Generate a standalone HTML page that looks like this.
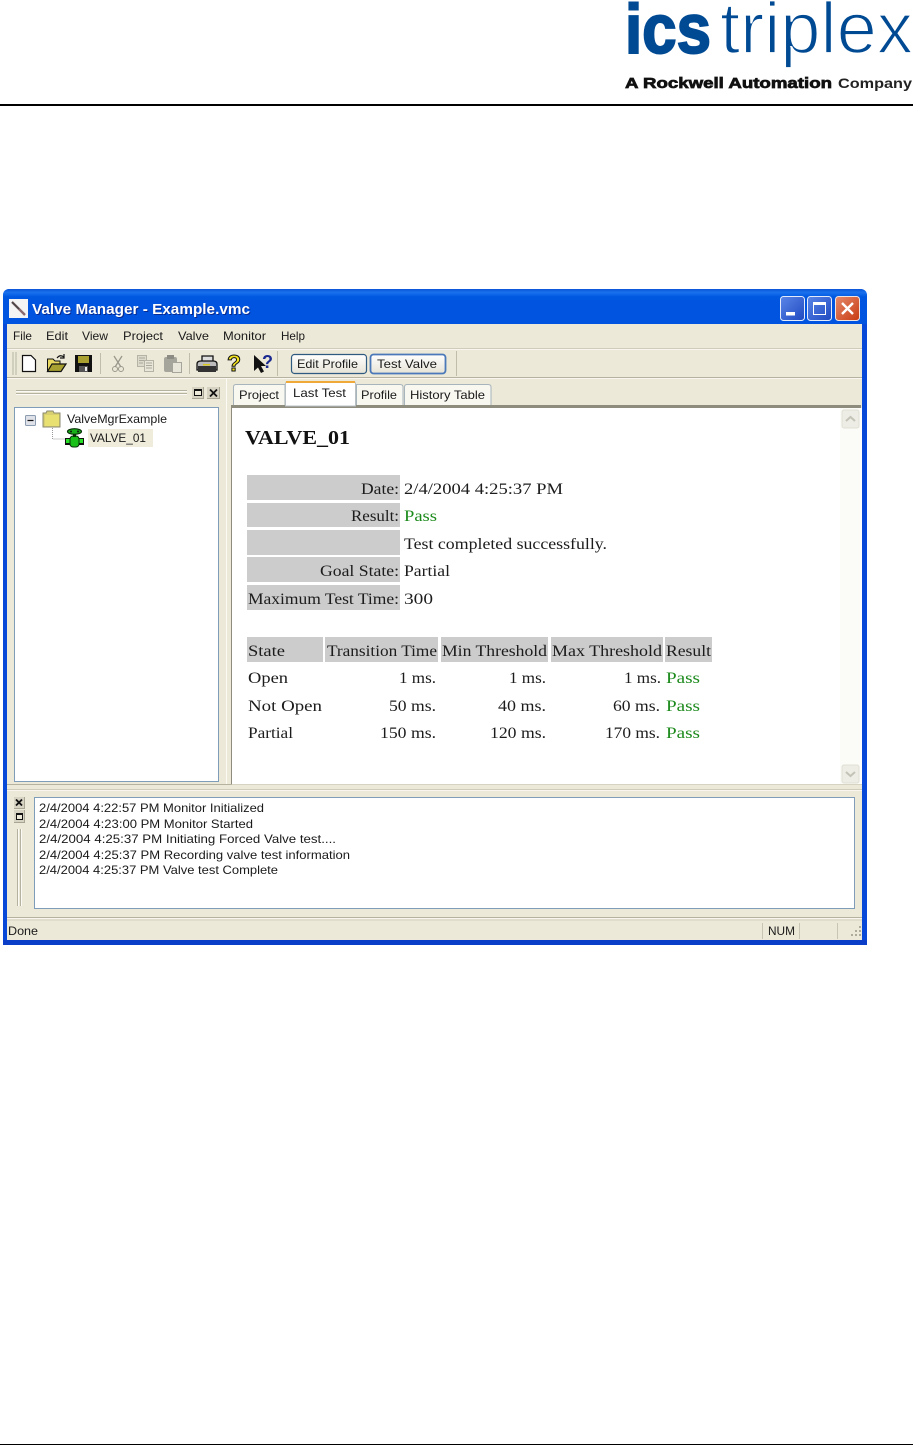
<!DOCTYPE html>
<html><head><meta charset="utf-8"><style>
html,body{margin:0;padding:0;background:#fff;width:913px;height:1445px;overflow:hidden}
svg{display:block}
.t{font-family:"Liberation Sans",sans-serif;font-size:12px;fill:#1a1a1a}
.s{font-family:"Liberation Serif",serif;font-size:16px;fill:#1c1c1c}
.g{fill:#1b8a1b}
</style></head><body>
<svg width="913" height="1445" viewBox="0 0 913 1445" xmlns="http://www.w3.org/2000/svg">
<defs>
<linearGradient id="tb" x1="0" y1="0" x2="0" y2="1"><stop offset="0" stop-color="#0a55d8"/><stop offset=".1" stop-color="#1a72ee"/><stop offset=".22" stop-color="#0058e0"/><stop offset=".8" stop-color="#0050dc"/><stop offset="1" stop-color="#0a66f0"/></linearGradient>
<linearGradient id="bb" x1="0" y1="0" x2="1" y2="1"><stop offset="0" stop-color="#5a86e8"/><stop offset="1" stop-color="#1f49c0"/></linearGradient>
<linearGradient id="rb" x1="0" y1="0" x2="1" y2="1"><stop offset="0" stop-color="#e58a6c"/><stop offset="1" stop-color="#c83a10"/></linearGradient>
<linearGradient id="btn" x1="0" y1="0" x2="0" y2="1"><stop offset="0" stop-color="#fff"/><stop offset="1" stop-color="#e6e3d6"/></linearGradient>
</defs>

<!-- logo -->
<text x="625" y="53" textLength="86" lengthAdjust="spacingAndGlyphs" font-family="Liberation Sans,sans-serif" font-weight="700" font-size="70" fill="#004a94" stroke="#004a94" stroke-width="2">ics</text>
<text x="720" y="53" textLength="193" lengthAdjust="spacingAndGlyphs" font-family="Liberation Sans,sans-serif" font-size="72" fill="#004a94" stroke="#fff" stroke-width="1.800">triplex</text>
<text x="625" y="88" textLength="207" lengthAdjust="spacingAndGlyphs" font-family="Liberation Sans,sans-serif" font-weight="700" font-size="15" fill="#111" stroke="#111" stroke-width=".7">A Rockwell Automation</text>
<text x="838" y="88" textLength="74" lengthAdjust="spacingAndGlyphs" font-family="Liberation Sans,sans-serif" font-weight="700" font-size="14" fill="#222">Company</text>
<rect x="0" y="104" width="913" height="2" fill="#000"/>
<rect x="0" y="1444" width="913" height="1" fill="#000"/>

<!-- window frame -->
<path d="M3 945V296q0-7 7-7H859q8 0 8 8V945Z" fill="#0848d8"/>
<rect x="3" y="289" width="864" height="35" fill="url(#tb)" rx="6"/>
<rect x="3" y="300" width="864" height="24" fill="#0054e0"/>
<rect x="3" y="940" width="864" height="5" fill="#0a3ec8"/>
<rect x="7" y="324" width="855" height="616" fill="#ece9d8"/>

<!-- title -->
<rect x="9" y="299" width="19" height="19" fill="#f4f4f4"/>
<path d="M12 302L25 315" stroke="#8a6a70" stroke-width="2.400"/>
<path d="M12 302L19 309" stroke="#444" stroke-width="1.400"/>
<text x="33" y="315" textLength="218" lengthAdjust="spacingAndGlyphs" font-family="Liberation Sans,sans-serif" font-weight="700" font-size="14.500" fill="#0a2a90">Valve Manager - Example.vmc</text>
<text x="32" y="314" textLength="218" lengthAdjust="spacingAndGlyphs" font-family="Liberation Sans,sans-serif" font-weight="700" font-size="14.500" fill="#fff">Valve Manager - Example.vmc</text>

<!-- caption buttons -->
<rect x="780.500" y="296.500" width="24" height="24" rx="3" fill="url(#bb)" stroke="#e4ecfb"/>
<rect x="786" y="312" width="9" height="3.500" fill="#fff"/>
<rect x="807.500" y="296.500" width="24" height="24" rx="3" fill="url(#bb)" stroke="#e4ecfb"/>
<rect x="813.500" y="302.500" width="12" height="12" fill="none" stroke="#fff"/>
<rect x="813" y="302" width="13" height="3" fill="#fff"/>
<rect x="835.500" y="296.500" width="24" height="24" rx="3" fill="url(#rb)" stroke="#f0e4e0"/>
<path d="M842 303L853 314M853 303L842 314" stroke="#fff" stroke-width="2.400"/>

<!-- menu -->
<text class="t" x="13" y="340" textLength="19" lengthAdjust="spacingAndGlyphs">File</text>
<text class="t" x="46" y="340" textLength="22" lengthAdjust="spacingAndGlyphs">Edit</text>
<text class="t" x="82" y="340" textLength="26" lengthAdjust="spacingAndGlyphs">View</text>
<text class="t" x="123" y="340" textLength="40" lengthAdjust="spacingAndGlyphs">Project</text>
<text class="t" x="178" y="340" textLength="31" lengthAdjust="spacingAndGlyphs">Valve</text>
<text class="t" x="223" y="340" textLength="43" lengthAdjust="spacingAndGlyphs">Monitor</text>
<text class="t" x="281" y="340" textLength="24" lengthAdjust="spacingAndGlyphs">Help</text>
<rect x="7" y="348" width="855" height="1" fill="#cfccbc"/>
<rect x="7" y="349" width="855" height="1" fill="#f8f6ee"/>

<!-- toolbar -->
<rect x="7" y="377" width="855" height="1" fill="#b5b2a0"/>
<rect x="7" y="378" width="855" height="1" fill="#f8f6ee"/>
<path d="M13 352V375M16 352V375" stroke="#b5b2a0"/>
<path d="M22.500 355.500H31L35.500 360V371.500H22.500Z" fill="#fff" stroke="#111" stroke-width="1.200"/>
<path d="M47.500 371.500V359H53L55 361H60V371.500Z" fill="#e8d860" stroke="#111"/>
<path d="M47.500 371.500L52 364H66L61 371.500Z" fill="#a8a030" stroke="#111" stroke-width="1.200"/>
<path d="M57 358Q60 354 64 357M64 354V358H60" fill="none" stroke="#111" stroke-width="1.200"/>
<rect x="75" y="355" width="17" height="17" fill="#111"/>
<rect x="78" y="356" width="11" height="7" fill="#a8a030"/>
<rect x="79" y="366" width="9" height="6" fill="#555"/>
<rect x="85" y="367" width="2" height="4" fill="#eee"/>
<rect x="100" y="353" width="1" height="21" fill="#c0bdaa"/>
<path d="M114 356L121 367M122 356L115 367" stroke="#9a988c" stroke-width="1.300"/>
<circle cx="115" cy="369" r="2.500" fill="none" stroke="#9a988c"/>
<circle cx="121" cy="369" r="2.500" fill="none" stroke="#9a988c"/>
<rect x="137.500" y="355.500" width="9" height="11" fill="#dcdacb" stroke="#b5b3a6"/>
<path d="M139 358H145M139 360.500H145M139 363H143" stroke="#aaa89c"/>
<rect x="144.500" y="360.500" width="9" height="11" fill="#e8e6d8" stroke="#b5b3a6"/>
<path d="M146 363H152M146 365.500H152M146 368H152" stroke="#aaa89c"/>
<rect x="164" y="357" width="13" height="15" rx="2" fill="#a6a59c"/>
<rect x="167" y="355" width="7" height="4" fill="#8c8b84"/>
<rect x="172.500" y="362.500" width="9" height="10" fill="#e8e6d8" stroke="#a6a59c"/>
<rect x="189" y="353" width="1" height="21" fill="#c0bdaa"/>
<path d="M202 356H213V362H202Z" fill="#ddd" stroke="#111" stroke-width="1.300"/>
<path d="M197 364Q197 361 201 361H213Q217 361 217 364V370H197Z" fill="#bbb" stroke="#111" stroke-width="1.300"/>
<rect x="198" y="366" width="18" height="6" fill="#333"/>
<rect x="203" y="364" width="7" height="1.500" fill="#d8c820"/>
<text x="227" y="371" font-family="Liberation Sans,sans-serif" font-weight="700" font-size="23" fill="#f4e420" stroke="#111" stroke-width="1">?</text>
<path d="M254 355V371L258 367.500L261 373L264 371.500L261 366H266Z" fill="#111"/>
<text x="262" y="368" font-family="Liberation Sans,sans-serif" font-weight="700" font-size="18" fill="#1a2a90">?</text>
<rect x="277" y="351" width="1" height="25" fill="#c0bdaa"/>

<rect x="291.500" y="354.500" width="75" height="19" rx="3" fill="url(#btn)" stroke="#2f5a80" stroke-width="1.200"/>
<text class="t" x="297" y="368" textLength="61" lengthAdjust="spacingAndGlyphs">Edit Profile</text>
<rect x="370.500" y="354.500" width="75" height="19" rx="3" fill="url(#btn)" stroke="#4a78b8" stroke-width="1.800"/>
<text class="t" x="377" y="368" textLength="60" lengthAdjust="spacingAndGlyphs">Test Valve</text>
<rect x="456" y="351" width="1" height="25" fill="#c0bdaa"/>

<!-- left panel -->
<path d="M16 390.500H187M16 393.500H187" stroke="#b5b2a0"/>
<path d="M16 391.500H187M16 394.500H187" stroke="#fbfaf4"/>
<rect x="192" y="387" width="12" height="12" fill="#d6d3c2"/>
<path d="M192 398.500H204M203.500 387V399" stroke="#a8a594"/>
<rect x="194.500" y="389.500" width="7" height="6" fill="#ece9d8" stroke="#111"/>
<rect x="194" y="389" width="8" height="2" fill="#111"/>
<rect x="207" y="387" width="13" height="12" fill="#d6d3c2"/>
<path d="M207 398.500H220M219.500 387V399" stroke="#a8a594"/>
<path d="M210 389.500L217 396.500M217 389.500L210 396.500" stroke="#111" stroke-width="1.800"/>
<rect x="14.500" y="407.500" width="204" height="374" fill="#fff" stroke="#7f9db9"/>

<rect x="25.500" y="415.500" width="10" height="10" rx="1" fill="#dfe2e8" stroke="#8c9cb0"/>
<path d="M27.500 420.500H33.500" stroke="#111" stroke-width="1.200"/>
<path d="M43 427V413H46L47 411H53L54 413H60V427Z" fill="#d8d070" stroke="#8a8a70"/>
<rect x="45" y="415" width="14" height="11" fill="#e8e070"/>
<path d="M52.500 428V439H65" fill="none" stroke="#999" stroke-dasharray="1 1"/>
<text class="t" x="67" y="423" textLength="100" lengthAdjust="spacingAndGlyphs">ValveMgrExample</text>
<rect x="88" y="429" width="65" height="18" fill="#efecdc"/>
<text class="t" x="90" y="442" textLength="56" lengthAdjust="spacingAndGlyphs">VALVE_01</text>
<rect x="65" y="438" width="19" height="7" fill="#111"/>
<rect x="66" y="439" width="17" height="4" fill="#28e028"/>
<rect x="70" y="436" width="9" height="11" rx="3" fill="#18c018" stroke="#063006"/>
<rect x="73" y="432" width="3" height="5" fill="#063006"/>
<ellipse cx="74.500" cy="431.500" rx="7" ry="2.800" fill="#18b018" stroke="#063006" stroke-width="1.200"/>
<circle cx="71" cy="431.500" r="1" fill="#111"/>
<circle cx="78" cy="431.500" r="1" fill="#111"/>

<!-- right pane -->
<rect x="226" y="379" width="1" height="405" fill="#fbfaf4"/>
<rect x="231" y="405" width="1" height="380" fill="#8e8c7c"/>
<rect x="7" y="784" width="225" height="1" fill="#b5b2a0"/>
<rect x="232" y="784" width="630" height="1" fill="#d6d3c2"/>
<rect x="7" y="789" width="855" height="1" fill="#cfccbc"/>
<rect x="7" y="790" width="855" height="1" fill="#f8f6ee"/>
<rect x="232" y="408" width="630" height="376" fill="#fff"/>
<rect x="232" y="405" width="629" height="3" fill="#8e8c7c"/>
<rect x="840" y="408" width="20" height="376" fill="#fbfbf8"/>
<rect x="842" y="410" width="17" height="18" rx="2" fill="#eeede5" stroke="#e0dfd4"/>
<path d="M846 421L850.500 417L855 421" fill="none" stroke="#c4c3b8" stroke-width="2"/>
<rect x="842" y="765" width="17" height="18" rx="2" fill="#eeede5" stroke="#e0dfd4"/>
<path d="M846 772L850.500 776L855 772" fill="none" stroke="#c4c3b8" stroke-width="2"/>

<!-- tabs -->
<path d="M233.500 405V387Q233.500 384.500 236 384.500H285V405" fill="#f8f7f0" stroke="#a8b4bc"/>
<text class="t" x="239" y="399" textLength="40" lengthAdjust="spacingAndGlyphs">Project</text>
<path d="M356.500 405V384.500H400Q403 384.500 403 387V405" fill="#f8f7f0" stroke="#a8b4bc"/>
<text class="t" x="361" y="399" textLength="36" lengthAdjust="spacingAndGlyphs">Profile</text>
<path d="M404.500 405V387Q404.500 384.500 407 384.500H488Q491 384.500 491 387V405" fill="#f8f7f0" stroke="#a8b4bc"/>
<text class="t" x="410" y="399" textLength="75" lengthAdjust="spacingAndGlyphs">History Table</text>
<path d="M285.500 406V384Q285.500 381.500 288 381.500H353Q355.500 381.500 355.500 384V406Z" fill="#fff" stroke="#b8c0c4"/>
<path d="M286 382H355" stroke="#f0a838" stroke-width="2"/>
<text class="t" x="293" y="397" textLength="53" lengthAdjust="spacingAndGlyphs">Last Test</text>

<!-- report -->
<text x="245" y="444" textLength="105" lengthAdjust="spacingAndGlyphs" font-family="Liberation Serif,serif" font-weight="700" font-size="19.500" fill="#111">VALVE_01</text>
<g fill="#ccc">
<rect x="247" y="475" width="153" height="25"/><rect x="247" y="503" width="153" height="24"/><rect x="247" y="530" width="153" height="25"/><rect x="247" y="557" width="153" height="25"/><rect x="247" y="585" width="153" height="25"/>
<rect x="247" y="637" width="76" height="25"/><rect x="325" y="637" width="113" height="25"/><rect x="441" y="637" width="107" height="25"/><rect x="551" y="637" width="112" height="25"/><rect x="665" y="637" width="47" height="25"/>
</g>
<text class="s" x="361" y="494" textLength="38" lengthAdjust="spacingAndGlyphs">Date:</text>
<text class="s" x="404" y="494" textLength="159" lengthAdjust="spacingAndGlyphs">2/4/2004 4:25:37 PM</text>
<text class="s" x="351" y="521" textLength="48" lengthAdjust="spacingAndGlyphs">Result:</text>
<text class="s g" x="404" y="521" textLength="33" lengthAdjust="spacingAndGlyphs">Pass</text>
<text class="s" x="404" y="549" textLength="203" lengthAdjust="spacingAndGlyphs">Test completed successfully.</text>
<text class="s" x="320" y="576" textLength="79" lengthAdjust="spacingAndGlyphs">Goal State:</text>
<text class="s" x="404" y="576" textLength="46" lengthAdjust="spacingAndGlyphs">Partial</text>
<text class="s" x="248" y="604" textLength="151" lengthAdjust="spacingAndGlyphs">Maximum Test Time:</text>
<text class="s" x="404" y="604" textLength="29" lengthAdjust="spacingAndGlyphs">300</text>

<text class="s" x="248" y="656" textLength="37" lengthAdjust="spacingAndGlyphs">State</text>
<text class="s" x="327" y="656" textLength="110" lengthAdjust="spacingAndGlyphs">Transition Time</text>
<text class="s" x="442" y="656" textLength="105" lengthAdjust="spacingAndGlyphs">Min Threshold</text>
<text class="s" x="552" y="656" textLength="110" lengthAdjust="spacingAndGlyphs">Max Threshold</text>
<text class="s" x="666" y="656" textLength="45" lengthAdjust="spacingAndGlyphs">Result</text>

<text class="s" x="248" y="683" textLength="40" lengthAdjust="spacingAndGlyphs">Open</text>
<text class="s" x="399" y="683" textLength="37" lengthAdjust="spacingAndGlyphs">1 ms.</text>
<text class="s" x="509" y="683" textLength="37" lengthAdjust="spacingAndGlyphs">1 ms.</text>
<text class="s" x="624" y="683" textLength="37" lengthAdjust="spacingAndGlyphs">1 ms.</text>
<text class="s g" x="666" y="683" textLength="34" lengthAdjust="spacingAndGlyphs">Pass</text>

<text class="s" x="248" y="711" textLength="74" lengthAdjust="spacingAndGlyphs">Not Open</text>
<text class="s" x="389" y="711" textLength="47" lengthAdjust="spacingAndGlyphs">50 ms.</text>
<text class="s" x="498" y="711" textLength="48" lengthAdjust="spacingAndGlyphs">40 ms.</text>
<text class="s" x="613" y="711" textLength="47" lengthAdjust="spacingAndGlyphs">60 ms.</text>
<text class="s g" x="666" y="711" textLength="34" lengthAdjust="spacingAndGlyphs">Pass</text>

<text class="s" x="248" y="738" textLength="45" lengthAdjust="spacingAndGlyphs">Partial</text>
<text class="s" x="380" y="738" textLength="56" lengthAdjust="spacingAndGlyphs">150 ms.</text>
<text class="s" x="490" y="738" textLength="56" lengthAdjust="spacingAndGlyphs">120 ms.</text>
<text class="s" x="605" y="738" textLength="55" lengthAdjust="spacingAndGlyphs">170 ms.</text>
<text class="s g" x="666" y="738" textLength="34" lengthAdjust="spacingAndGlyphs">Pass</text>

<!-- log bar -->
<rect x="14" y="797" width="11" height="12" fill="#d6d3c2"/>
<path d="M14 808.500H25M24.500 797V809" stroke="#a8a594"/>
<path d="M16 799.500L22 805.500M22 799.500L16 805.500" stroke="#111" stroke-width="1.800"/>
<rect x="14" y="810" width="11" height="13" fill="#d6d3c2"/>
<path d="M14 822.500H25M24.500 810V823" stroke="#a8a594"/>
<rect x="16.500" y="813.500" width="6" height="6" fill="#ece9d8" stroke="#111"/>
<rect x="16" y="813" width="7" height="2" fill="#111"/>
<path d="M17.500 829V906M20.500 829V906" stroke="#b5b2a0"/>
<path d="M18.500 829V906M21.500 829V906" stroke="#fbfaf4"/>
<rect x="34.500" y="797.500" width="820" height="111" fill="#fff" stroke="#7f9db9"/>
<text class="t" x="39" y="812" textLength="225" lengthAdjust="spacingAndGlyphs">2/4/2004 4:22:57 PM Monitor Initialized</text>
<text class="t" x="39" y="828" textLength="214" lengthAdjust="spacingAndGlyphs">2/4/2004 4:23:00 PM Monitor Started</text>
<text class="t" x="39" y="843" textLength="297" lengthAdjust="spacingAndGlyphs">2/4/2004 4:25:37 PM Initiating Forced Valve test....</text>
<text class="t" x="39" y="859" textLength="311" lengthAdjust="spacingAndGlyphs">2/4/2004 4:25:37 PM Recording valve test information</text>
<text class="t" x="39" y="874" textLength="239" lengthAdjust="spacingAndGlyphs">2/4/2004 4:25:37 PM Valve test Complete</text>

<!-- status -->
<rect x="7" y="917" width="855" height="1" fill="#b5b2a0"/>
<rect x="7" y="918" width="855" height="1" fill="#f8f6ee"/>
<rect x="7" y="919" width="855" height="2" fill="#e0ddcc"/>
<text class="t" x="8" y="935" textLength="30" lengthAdjust="spacingAndGlyphs">Done</text>
<text class="t" x="768" y="935" textLength="27" lengthAdjust="spacingAndGlyphs">NUM</text>
<path d="M762.500 923V939M799.500 923V939M837.500 923V939" stroke="#c8c5b4"/>
<path d="M859 926h2v2h-2zM855 930h2v2h-2zM859 930h2v2h-2zM851 934h2v2h-2zM855 934h2v2h-2zM859 934h2v2h-2z" fill="#aeab9a"/>
</svg>
</body></html>
